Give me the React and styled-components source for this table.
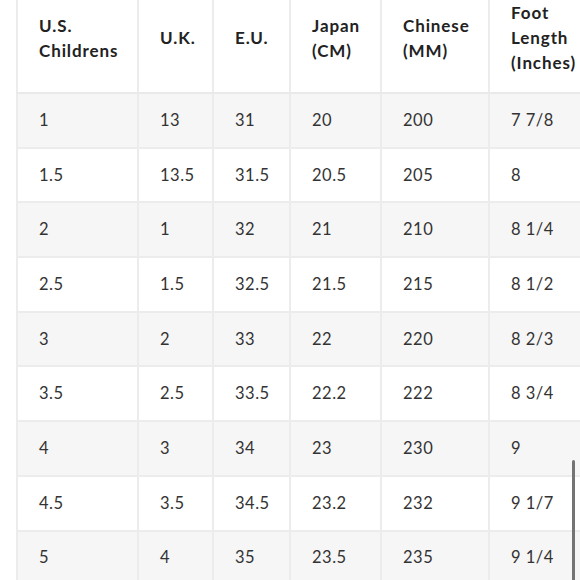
import React from "react";
import styled, { createGlobalStyle } from "styled-components";

const headers = [
  ["U.S.", "Childrens"],
  ["U.K."],
  ["E.U."],
  ["Japan", "(CM)"],
  ["Chinese", "(MM)"],
  ["Foot", "Length", "(Inches)"],
];

const rows = [
  ["1", "13", "31", "20", "200", "7 7/8"],
  ["1.5", "13.5", "31.5", "20.5", "205", "8"],
  ["2", "1", "32", "21", "210", "8 1/4"],
  ["2.5", "1.5", "32.5", "21.5", "215", "8 1/2"],
  ["3", "2", "33", "22", "220", "8 2/3"],
  ["3.5", "2.5", "33.5", "22.2", "222", "8 3/4"],
  ["4", "3", "34", "23", "230", "9"],
  ["4.5", "3.5", "34.5", "23.2", "232", "9 1/7"],
  ["5", "4", "35", "23.5", "235", "9 1/4"],
];

const widths = [121, 75, 77, 91, 108, 110];

const GlobalStyle = createGlobalStyle`
  html, body {
    margin: 0;
    padding: 0;
    background: #fff;
  }
`;

const Viewport = styled.div`
  position: relative;
  width: 580px;
  height: 580px;
  overflow: hidden;
  background: #fff;
`;

const Table = styled.table`
  margin-left: 16px;
  border-collapse: collapse;
  table-layout: fixed;
  width: ${widths.reduce((a, b) => a + b, 0)}px;
  font-family: Lato, "Liberation Sans", sans-serif;
  color: #2b2b2b;
`;

const HeadCell = styled.th`
  height: 75px;
  padding: 0 0 17px 21px;
  text-align: left;
  vertical-align: middle;
  font-size: 17px;
  font-weight: 700;
  line-height: 25px;
  letter-spacing: 0.9px;
  color: #222;
  white-space: nowrap;
  border-left: 2px solid #ececec;
  border-bottom: 2px solid #e9e9e9;
`;

const Row = styled.tr`
  background: ${(p) => (p.$shaded ? "#f6f6f6" : "#fff")};
`;

const Cell = styled.td`
  height: 51.7px;
  padding: 0 0 1px 21px;
  font-size: 16.5px;
  font-weight: 400;
  letter-spacing: 0.5px;
  color: #333;
  white-space: nowrap;
  border-left: 2px solid #ececec;
  border-bottom: 2px solid #ececec;
`;

const ScrollThumb = styled.div`
  position: absolute;
  right: 5px;
  top: 460px;
  width: 3px;
  height: 130px;
  border-radius: 2px;
  background: #747474;
`;

export default function App() {
  return (
    <Viewport>
      <GlobalStyle />
      <Table>
        <colgroup>
          {widths.map((w, i) => (
            <col key={i} style={{ width: w }} />
          ))}
        </colgroup>
        <thead>
          <tr>
            {headers.map((lines, i) => (
              <HeadCell key={i}>
                {lines.map((l, j) => (
                  <div key={j}>{l}</div>
                ))}
              </HeadCell>
            ))}
          </tr>
        </thead>
        <tbody>
          {rows.map((r, i) => (
            <Row key={i} $shaded={i % 2 === 0}>
              {r.map((v, j) => (
                <Cell key={j}>{v}</Cell>
              ))}
            </Row>
          ))}
        </tbody>
      </Table>
      <ScrollThumb />
    </Viewport>
  );
}
